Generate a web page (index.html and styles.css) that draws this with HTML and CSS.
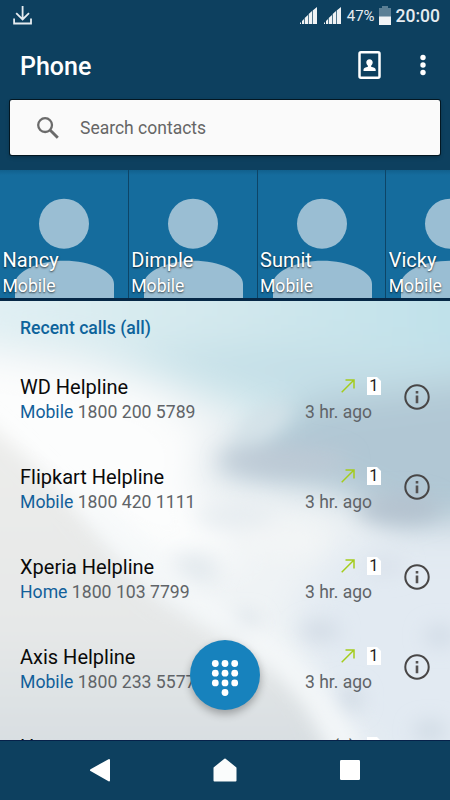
FILE: index.html
```html
<!DOCTYPE html>
<html lang="en">
<head>
    <meta charset="UTF-8">
    <meta name="viewport" content="width=device-width, initial-scale=1.0">
    <title>Phone</title>
    <link rel="stylesheet" href="styles.css">
</head>
<body>
    <!-- Shared icons -->
    <svg class="icon-defs" width="0" height="0">
        <symbol id="avatar" viewBox="0 0 128 128">
            <circle cx="64" cy="53.7" r="25"/>
            <path d="M15 128V114C15 101 39 90.7 64.500 90.7S114 101 114 114V128Z"/>
        </symbol>
        <symbol id="outgoing" viewBox="0 0 14 14">
            <path d="M.7 13.300 12.700 1.300M4.500 1H13V9.500" fill="none" stroke="#a4cc1c" stroke-width="1.500"/>
        </symbol>
        <symbol id="info" viewBox="0 0 26 26">
            <circle cx="13" cy="13" r="11.700" fill="none" stroke="#484646" stroke-width="2"/>
            <path d="M11.700 7h2.600v2.500h-2.600zM11.700 11.600h2.600v7.700h-2.600z" fill="#555252"/>
        </symbol>
    </svg>

    <div class="phone">
        <header class="header">
            <div class="status">
                <svg class="download" width="20" height="20" viewBox="0 0 20 20">
                    <path d="M9.600 0V13.500M3.200 7.200 9.600 13.500 16 7.200M1.100 12.500V17.500H18V12.500" fill="none" stroke="#e6ecf0" stroke-width="1.800"/>
                </svg>
                <div class="status-right">
                    <svg class="signal" width="17" height="17" viewBox="0 0 17 17">
                        <path d="M0 17v-1l1-1v2zM2 17v-3l2-2v5zM4.700 17v-6l3.300-3v9zM8.700 17V7l3.300-3v13zM12.700 17V3.500L17 0v17z"/>
                    </svg>
                    <svg class="signal" width="17" height="17" viewBox="0 0 17 17">
                        <path d="M0 17v-1l1-1v2zM2 17v-3l2-2v5zM4.700 17v-6l3.300-3v9zM8.700 17V7l3.300-3v13zM12.700 17V3.500L17 0v17z"/>
                    </svg>
                    <span class="percent">47%</span>
                    <svg class="battery" width="12" height="19" viewBox="0 0 12 19">
                        <path d="M0 2h3V0h6v2h3v17H0z" fill="#5b7f95"/>
                        <path d="M0 10.500h12V19H0z" fill="#f0f3f5"/>
                    </svg>
                    <span class="clock">20:00</span>
                </div>
            </div>

            <div class="title-bar">
                <h1>Phone</h1>
                <svg class="contacts" width="23" height="28" viewBox="0 0 23 28">
                    <rect x="1.500" y="1.300" width="20" height="25.400" rx="1.500" fill="none" stroke="#fff" stroke-width="2.500"/>
                    <path d="M11.500 8.200c2 0 3.200 1.400 3.200 3.100 0 1.500-.7 2.800-1.600 3.500v1c2.500.5 4.400 1.300 4.600 2.600v1.500H5.500v-1.500c.2-1.300 2-2.100 4.400-2.600v-1c-.9-.7-1.600-2-1.600-3.500 0-1.700 1.200-3.100 3.200-3.100z" fill="#fff"/>
                </svg>
                <svg class="more" width="6" height="22" viewBox="0 0 6 22">
                    <circle cx="3" cy="3.500" r="2.700" fill="#fff"/>
                    <circle cx="3" cy="11" r="2.700" fill="#fff"/>
                    <circle cx="3" cy="18.500" r="2.700" fill="#fff"/>
                </svg>
            </div>

            <div class="search">
                <svg width="22" height="22" viewBox="0 0 22 22">
                    <circle cx="8.100" cy="8.100" r="6.900" fill="none" stroke="#6b6b6b" stroke-width="2.300"/>
                    <path d="M13 13 20.800 20.800" stroke="#6b6b6b" stroke-width="2.900"/>
                </svg>
                <span>Search contacts</span>
            </div>
        </header>

        <div class="favorites">
            <div class="tile">
                <svg class="avatar"><use href="#avatar"/></svg>
                <div class="tile-text"><b>Nancy</b><span>Mobile</span></div>
            </div>
            <div class="tile">
                <svg class="avatar"><use href="#avatar"/></svg>
                <div class="tile-text"><b>Dimple</b><span>Mobile</span></div>
            </div>
            <div class="tile">
                <svg class="avatar"><use href="#avatar"/></svg>
                <div class="tile-text"><b>Sumit</b><span>Mobile</span></div>
            </div>
            <div class="tile">
                <svg class="avatar"><use href="#avatar"/></svg>
                <div class="tile-text"><b>Vicky</b><span>Mobile</span></div>
            </div>
        </div>

        <main class="calls">
            <!-- Blurred beach wallpaper -->
            <svg class="wallpaper" width="450" height="439" viewBox="0 0 450 439">
                <defs>
                    <linearGradient id="sea" x1="0" y1="0" x2="1" y2="0">
                        <stop offset="0" stop-color="#e3f1f5"/>
                        <stop offset=".5" stop-color="#d2e8ed"/>
                        <stop offset="1" stop-color="#bbdfe9"/>
                    </linearGradient>
                    <linearGradient id="sand" x1="0" y1="0" x2="0" y2="1">
                        <stop offset="0" stop-color="#ededeb"/>
                        <stop offset=".6" stop-color="#e6e8e8"/>
                        <stop offset="1" stop-color="#d5dce0"/>
                    </linearGradient>
                    <filter id="soft" x="-50%" y="-50%" width="200%" height="200%"><feGaussianBlur stdDeviation="18"/></filter>
                    <filter id="fine" x="-50%" y="-50%" width="200%" height="200%"><feGaussianBlur stdDeviation="10"/></filter>
                </defs>
                <rect width="450" height="439" fill="#eff3f5"/>
                <g filter="url(#soft)">
                    <path d="M-60-60H510V160L330 150 200 95 90 55-60 35Z" fill="url(#sea)"/>
                    <path d="M130 50 300 45 510 60V105L350 105 220 80Z" fill="#c4dfe7"/>
                    <path d="M310 100 510 75V225L400 225 330 190 200 165 240 145Z" fill="#b1c7d4"/>
                    <path d="M-60 50 70 70 160 95 205 140 190 190 250 260 150 260-60 130Z" fill="#fcfdfd"/>
                    <path d="M350 235H510V500H400L320 390 290 310Z" fill="#e2eaf2"/>
                </g>
                <g filter="url(#fine)">
                    <ellipse cx="285" cy="160" rx="65" ry="15" fill="#bec9d5" fill-opacity=".8"/>
                    <ellipse cx="400" cy="208" rx="42" ry="15" fill="#b3bfcd" fill-opacity=".85"/>
                    <ellipse cx="265" cy="122" rx="30" ry="12" fill="#d6e3e9" transform="rotate(-35 265 122)"/>
                    <ellipse cx="195" cy="268" rx="24" ry="16" fill="#e0e7ec" fill-opacity=".8"/>
                    <ellipse cx="235" cy="215" rx="40" ry="12" fill="#e5ebef" fill-opacity=".8"/>
                    <ellipse cx="280" cy="240" rx="45" ry="16" fill="#f3f5f6"/>
                    <ellipse cx="245" cy="322" rx="14" ry="8" fill="#d0d9e2"/>
                    <ellipse cx="320" cy="330" rx="20" ry="9" fill="#d0d9e3"/>
                    <ellipse cx="385" cy="265" rx="20" ry="9" fill="#d9e1ea"/>
                    <ellipse cx="350" cy="398" rx="12" ry="12" fill="#cfd9e3"/>
                    <ellipse cx="440" cy="335" rx="16" ry="10" fill="#d0dae5"/>
                    <ellipse cx="430" cy="430" rx="16" ry="9" fill="#ccd7e1"/>
                </g>
                <path d="M-30 110C20 145 80 210 120 262S220 325 270 365 310 420 340 470H-30Z" fill="url(#sand)" filter="url(#fine)"/>
                <path d="M85 190C125 245 185 295 235 325S315 385 350 450" fill="none" stroke="#f7f9fa" stroke-width="20" stroke-opacity=".85" filter="url(#fine)"/>
            </svg>

            <h2>Recent calls (all)</h2>

            <div class="call">
                <div class="who">
                    <div class="name">WD Helpline</div>
                    <div class="number"><span>Mobile</span> 1800 200 5789</div>
                </div>
                <div class="when">
                    <div class="marks"><svg class="arrow"><use href="#outgoing"/></svg><i class="sim">1</i></div>
                    <div class="time">3 hr. ago</div>
                </div>
                <svg class="info"><use href="#info"/></svg>
            </div>

            <div class="call">
                <div class="who">
                    <div class="name">Flipkart Helpline</div>
                    <div class="number"><span>Mobile</span> 1800 420 1111</div>
                </div>
                <div class="when">
                    <div class="marks"><svg class="arrow"><use href="#outgoing"/></svg><i class="sim">1</i></div>
                    <div class="time">3 hr. ago</div>
                </div>
                <svg class="info"><use href="#info"/></svg>
            </div>

            <div class="call">
                <div class="who">
                    <div class="name">Xperia Helpline</div>
                    <div class="number"><span>Home</span> 1800 103 7799</div>
                </div>
                <div class="when">
                    <div class="marks"><svg class="arrow"><use href="#outgoing"/></svg><i class="sim">1</i></div>
                    <div class="time">3 hr. ago</div>
                </div>
                <svg class="info"><use href="#info"/></svg>
            </div>

            <div class="call">
                <div class="who">
                    <div class="name">Axis Helpline</div>
                    <div class="number"><span>Mobile</span> 1800 233 5577</div>
                </div>
                <div class="when">
                    <div class="marks"><svg class="arrow"><use href="#outgoing"/></svg><i class="sim">1</i></div>
                    <div class="time">3 hr. ago</div>
                </div>
                <svg class="info"><use href="#info"/></svg>
            </div>

            <div class="call">
                <div class="who">
                    <div class="name">H</div>
                </div>
                <div class="when">
                    <div class="marks"><span class="count">(2)</span><i class="sim"></i></div>
                </div>
                <svg class="info"><use href="#info"/></svg>
            </div>

            <div class="dial">
                <svg width="28" height="38" viewBox="0 0 28 38" fill="#fff">
                    <circle cx="4.300" cy="4.500" r="3.400"/><circle cx="14" cy="4.500" r="3.400"/><circle cx="23.700" cy="4.500" r="3.400"/>
                    <circle cx="4.300" cy="14.200" r="3.400"/><circle cx="14" cy="14.200" r="3.400"/><circle cx="23.700" cy="14.200" r="3.400"/>
                    <circle cx="4.300" cy="23.900" r="3.400"/><circle cx="14" cy="23.900" r="3.400"/><circle cx="23.700" cy="23.900" r="3.400"/>
                    <circle cx="14" cy="33.500" r="3.400"/>
                </svg>
            </div>
        </main>

        <nav class="nav">
            <svg width="24" height="26" viewBox="0 0 24 26"><path d="M21 2V22.500L3 12.200Z" fill="#fff" stroke="#fff" stroke-width="2" stroke-linejoin="round"/></svg>
            <svg width="24" height="26" viewBox="0 0 24 26"><path d="M12 1.500 22.500 10V22.500H1.500V10Z" fill="#fafcfc" stroke="#fafcfc" stroke-width="2" stroke-linejoin="round"/></svg>
            <svg width="24" height="26" viewBox="0 0 24 26"><rect x="2" y="2" width="20" height="20" rx="1.200" fill="#fff"/></svg>
        </nav>
    </div>
</body>
</html>
```

FILE: styles.css
```css
body {
    font-family: Roboto, 'Liberation Sans', sans-serif;
    margin: 0;
    padding: 0;
    background-color: #0d405f;
}

svg {
    display: block;
    flex: none;
}

.icon-defs {
    position: absolute;
}

.phone {
    width: 450px;
    height: 800px;
    overflow: hidden;
    display: flex;
    flex-direction: column;
}

/* Header */
.header {
    height: 170px;
    flex: none;
    background-color: #0d405f;
    color: #fff;
}

.status {
    height: 32px;
    box-sizing: border-box;
    padding: 0 10px 0 13px;
    display: flex;
    justify-content: space-between;
    align-items: center;
}

.download {
    margin-top: -1px;
}

.status-right {
    display: flex;
    align-items: center;
    color: #e6ecf0;
}

.signal {
    fill: #f0f3f5;
    margin-right: 7px;
    margin-top: -1px;
}

.percent {
    font-size: 15px;
    margin: 0 4px 0 -1px;
}

.battery {
    margin-right: 5px;
    margin-top: -2px;
}

.clock {
    font-size: 17.5px;
    font-weight: 500;
}

.title-bar {
    height: 68px;
    padding: 0 24px 0 20px;
    display: flex;
    align-items: center;
}

h1 {
    flex: 1;
    margin: 0;
    font-size: 25px;
    font-weight: 500;
}

.contacts {
    margin-right: 39px;
    margin-top: -2px;
}

.more {
    margin-top: -2px;
}

.search {
    height: 55px;
    margin: 0 10px;
    padding-left: 27px;
    display: flex;
    align-items: center;
    gap: 21px;
    background-color: #fafafa;
    border-radius: 2px;
    box-shadow: 0 0 0 1px #031722, 0 2px 4px rgba(0, 0, 0, 0.3);
    color: #666;
    font-size: 17.5px;
}

/* Favorites strip */
.favorites {
    height: 128px;
    flex: none;
    display: flex;
    gap: 1px;
    overflow: hidden;
    background-color: #0d4567;
    border-bottom: 3px solid #062846;
}

.tile {
    width: 127.75px;
    height: 128px;
    flex: none;
    display: grid;
    background: linear-gradient(#11608d, #156c9d 5px);
}

.avatar {
    width: 128px;
    height: 128px;
    grid-area: 1 / 1;
    fill: #9abed3;
}

.tile-text {
    grid-area: 1 / 1;
    align-self: end;
    padding: 0 0 1px 2.5px;
    color: #fff;
    text-shadow: 0 1px 2px rgba(0, 0, 0, 0.7);
}

.tile-text b {
    display: block;
    font-size: 20px;
    font-weight: 400;
    line-height: 29px;
}

.tile-text span {
    display: block;
    font-size: 17.6px;
    line-height: 22px;
}

/* Call list */
.calls {
    height: 439px;
    flex: none;
    position: relative;
    z-index: 0;
    overflow: hidden;
    box-shadow: inset 0 3px 4px rgba(0, 0, 40, 0.2);
}

.wallpaper {
    position: absolute;
    top: 0;
    left: 0;
    z-index: -1;
}

h2 {
    margin: 0;
    padding-left: 20px;
    height: 51px;
    line-height: 54px;
    font-size: 17.6px;
    font-weight: 500;
    color: #0d639b;
}

.call {
    height: 90px;
    box-sizing: border-box;
    padding: 20px 20px 0;
    display: flex;
    align-items: flex-start;
}

.who {
    flex: 1;
}

.name {
    padding-top: 2px;
    font-size: 20px;
    line-height: 27px;
    color: #0a0a0a;
}

.number,
.time {
    font-size: 17.65px;
    line-height: 23px;
    color: #606468;
}

.number span {
    color: #12609a;
}

.when {
    display: flex;
    flex-direction: column;
    align-items: flex-end;
    margin-right: 32px;
}

.time {
    font-size: 17.5px;
}

.marks {
    height: 29px;
    margin-right: -9px;
    display: flex;
    align-items: center;
    gap: 12px;
}

.arrow {
    width: 14px;
    height: 14px;
    margin-top: -1px;
}

.sim {
    width: 14px;
    height: 18px;
    margin-top: -1px;
    background-color: #fff;
    clip-path: polygon(0 0, 10px 0, 100% 4px, 100% 100%, 0 100%);
    color: #222;
    font-size: 16.5px;
    font-style: normal;
    line-height: 18px;
    text-align: center;
}

.count {
    font-size: 17.5px;
    color: #555;
}

.info {
    width: 26px;
    height: 26px;
    margin-top: 12px;
}

/* Dialpad button over the list */
.dial {
    position: absolute;
    left: 190px;
    bottom: 30px;
    width: 70px;
    height: 70px;
    border-radius: 50%;
    background-color: #1782bd;
    box-shadow: 0 4px 8px rgba(0, 0, 0, 0.3);
    display: flex;
    align-items: center;
    justify-content: center;
}

.dial svg {
    margin-top: 6px;
}

/* Navigation bar */
.nav {
    flex: 1;
    display: flex;
    justify-content: center;
    align-items: center;
    gap: 101px;
    background-color: #0d405f;
    border-top: 1px solid #06214a;
}
```
